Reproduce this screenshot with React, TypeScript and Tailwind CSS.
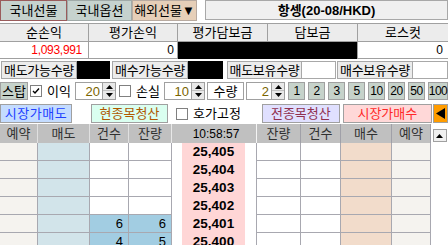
import React from "react";

function Spin({ value, boxCls }: { value: string; boxCls: string }) {
  return (
    <div className="flex h-[18px]">
      <div className={`${boxCls} h-[18px] bg-white border border-[#a0a0a0] border-r-0 flex items-center justify-end pr-[2px] text-[#7a6400] text-[13px]`}>
        {value}
      </div>
      <div className="w-[14px] h-[18px] flex flex-col border border-[#a0a0a0] bg-[#e8e8e8]">
        <div className="h-[8px] flex items-center justify-center border-b border-[#c0c0c0]">
          <svg width="7" height="4" viewBox="0 0 7 4"><polygon points="3.5,0 7,4 0,4" fill="#000" /></svg>
        </div>
        <div className="flex-1 flex items-center justify-center">
          <svg width="7" height="4" viewBox="0 0 7 4"><polygon points="0,0 7,0 3.5,4" fill="#000" /></svg>
        </div>
      </div>
    </div>
  );
}

function Check({ checked }: { checked?: boolean }) {
  return (
    <div className="w-[12px] h-[12px] border border-[#808080] bg-white flex items-center justify-center">
      {checked && (
        <svg width="8" height="8" viewBox="0 0 8 8">
          <polyline points="1,4 3,6 7,1.5" fill="none" stroke="#000" strokeWidth="1.4" />
        </svg>
      )}
    </div>
  );
}

const rows = [
  { p: "25,405", c: "", q: "" },
  { p: "25,404", c: "", q: "" },
  { p: "25,403", c: "", q: "" },
  { p: "25,402", c: "", q: "" },
  { p: "25,401", c: "6", q: "6" },
  { p: "25,400", c: "4", q: "5" },
];

export default function App() {
  return (
    <div className="w-[448px] h-[245px] bg-white overflow-hidden text-[13px] leading-none text-black font-['Liberation_Sans','Noto_Sans_CJK_KR',sans-serif]">
      {/* Row 1 tabs */}
      <div className="flex h-[21px] items-start">
        <div className="w-[67px] h-[21px] bg-[#c6d2ce] border border-[#9a5c5c] flex items-center justify-center">국내선물</div>
        <div className="w-[65px] h-[21px] bg-[#c6d2ce] border border-[#a0aaa8] flex items-center justify-center">국내옵션</div>
        <div className="w-[65px] h-[21px] bg-[#e6cfb8] border border-[#b8aaa0] flex items-center justify-center">해외선물▼</div>
        <div className="ml-[8px] flex-1 h-[20px] bg-[#f0f0f0] border border-[#a8a8a8] flex items-center justify-center font-bold">항셍(20-08/HKD)</div>
      </div>

      {/* Row 2-3 summary table */}
      <div className="mt-[2px] grid grid-cols-[89px_89px_90px_90px_90px] border-t border-[#a0a0a0]">
        {["순손익", "평가손익", "평가담보금", "담보금", "로스컷"].map((h, i) => (
          <div key={h} className={`h-[18px] bg-[#ececec] border-b border-[#a0a0a0] flex items-center justify-center ${i < 4 ? "border-r" : ""}`}>{h}</div>
        ))}
        <div className="h-[17px] border-r border-b border-[#a0a0a0] flex items-center justify-end pr-[6px] text-[#ff0000] text-[12px] tracking-[-0.3px]">1,093,991</div>
        <div className="h-[17px] border-r border-b border-[#a0a0a0] flex items-center justify-end pr-[3px] text-[12px]">0</div>
        <div className="h-[17px] bg-black"></div>
        <div className="h-[17px] bg-black border-r border-[#a0a0a0]"></div>
        <div className="h-[17px] border-b border-[#a0a0a0] flex items-center justify-end pr-[5px] text-[12px]">0</div>
      </div>

      {/* Row 4 */}
      <div className="mt-[2px] flex h-[18px] items-stretch">
        <div className="ml-[1px] w-[76px] bg-[#ececec] border border-[#a8a8a8] flex items-center justify-center tracking-[-0.3px]">매도가능수량</div>
        <div className="w-[33px] bg-black"></div>
        <div className="ml-[2px] w-[76px] bg-[#ececec] border border-[#a8a8a8] flex items-center justify-center tracking-[-0.3px]">매수가능수량</div>
        <div className="w-[35px] bg-black"></div>
        <div className="ml-[4px] w-[75px] bg-[#ececec] border border-[#a8a8a8] flex items-center justify-center tracking-[-0.3px]">매도보유수량</div>
        <div className="w-[34px] bg-white border border-l-0 border-[#a8a8a8]"></div>
        <div className="ml-[1px] w-[76px] bg-[#ececec] border border-[#a8a8a8] flex items-center justify-center tracking-[-0.3px]">매수보유수량</div>
        <div className="flex-1 bg-white border border-l-0 border-[#a8a8a8]"></div>
      </div>

      {/* Row 5 */}
      <div className="mt-[3px] flex h-[18px] items-center">
        <div className="w-[28px] h-[18px] bg-[#c6d2ca] border border-[#a0a0a0] flex items-center justify-center">스탑</div>
        <div className="ml-[2px]"><Check checked /></div>
        <div className="ml-[5px] w-[26px]">이익</div>
        <div className="ml-[2px]"><Spin value="20" boxCls="w-[27px]" /></div>
        <div className="ml-[3px]"><Check /></div>
        <div className="ml-[5px] w-[26px]">손실</div>
        <div className="ml-[2px]"><Spin value="10" boxCls="w-[27px]" /></div>
        <div className="ml-[2px] w-[37px] h-[18px] bg-white border border-[#a0a0a0] flex items-center justify-center">수량</div>
        <div className="ml-[2px]"><Spin value="2" boxCls="w-[25px]" /></div>
        <div className="ml-[3px] flex gap-[3px]">
          {["1", "2", "3", "5", "10", "20", "50"].map((n) => (
            <div key={n} className="w-[17px] h-[18px] bg-[#c6d2ca] border border-[#a0a0a0] flex items-center justify-center text-[12px] tracking-[-0.5px]">{n}</div>
          ))}
          <div className="w-[20px] h-[18px] bg-[#c6d2ca] border border-[#a0a0a0] flex items-center justify-center text-[12px] tracking-[-0.5px]">100</div>
        </div>
      </div>

      {/* Row 6 */}
      <div className="mt-[4px] flex h-[19px] items-center">
        <div className="w-[72px] h-[19px] bg-[#c4dcff] border border-[#a0a0a0] flex items-center justify-center text-[#2040ff] tracking-[0.5px]">시장가매도</div>
        <div className="ml-[19px] w-[77px] h-[19px] bg-[#dafff0] border border-[#a0a0a0] flex items-center justify-center text-[#b05800]">현종목청산</div>
        <div className="ml-[8px]"><Check /></div>
        <div className="ml-[5px]">호가고정</div>
        <div className="ml-[21px] w-[78px] h-[19px] bg-[#e0e0ff] border border-[#a0a0a0] flex items-center justify-center text-[#903050]">전종목청산</div>
        <div className="ml-[3px] w-[89px] h-[19px] bg-[#ffd8d8] border border-[#a0a0a0] flex items-center justify-center text-[#ff2828]">시장가매수</div>
        <div className="ml-[1px] flex-1 h-[19px] bg-[#ff9c00] border border-[#a0a0a0] flex items-center justify-center">
          <svg width="9" height="11" viewBox="0 0 9 11"><polygon points="9,0 9,11 0,5.5" fill="#000" /></svg>
        </div>
      </div>

      {/* Order book header */}
      <div className="mt-[1px] flex h-[19px] text-[#303030]">
        <div className="w-[38px] bg-[#c0c0c0] border-r border-[#e0e0e0] flex items-center justify-center">예약</div>
        <div className="w-[52px] bg-[#c0c0c0] border-r border-[#e0e0e0] flex items-center justify-center">매도</div>
        <div className="w-[39px] bg-[#c0c0c0] border-r border-[#e0e0e0] flex items-center justify-center">건수</div>
        <div className="w-[43px] bg-[#c0c0c0] border-r border-[#e8e8e8] flex items-center justify-center">잔량</div>
        <div className="w-[85px] bg-[#c0c0c0] border-r border-[#f4f4f4] flex items-center justify-center text-black text-[12px] pl-[4px]">10:58:57</div>
        <div className="w-[44px] bg-[#c0c0c0] border-r border-[#a0a0a8] flex items-center justify-center">잔량</div>
        <div className="w-[40px] bg-[#c0c0c0] border-r border-[#a0a0a8] flex items-center justify-center">건수</div>
        <div className="w-[51px] bg-[#c0c0c0] border-r border-[#a0a0a8] flex items-center justify-center">매수</div>
        <div className="w-[39px] bg-[#c0c0c0] border-r border-[#a0a0a8] flex items-center justify-center">예약</div>
        <div className="flex-1 bg-white flex items-start justify-center pt-[5px]">
          <div className="w-[14px] h-[13px] bg-[#f0f0f0] border border-[#a0a0a0] flex items-center justify-center">
            <svg width="7" height="4" viewBox="0 0 7 4"><polygon points="3.5,0 7,4 0,4" fill="#000" /></svg>
          </div>
        </div>
      </div>

      {/* Order book rows */}
      <div className="flex flex-col">
        {rows.map((r) => (
          <div key={r.p} className="flex h-[18px]">
            <div className="w-[38px] bg-[#f5f3ef] border-r border-b border-[#a8a8b0]"></div>
            <div className="w-[52px] bg-[#d2e4ea] border-r border-b border-[#a8a8b0]"></div>
            <div className={`w-[39px] border-r border-b border-[#a8a8b0] flex items-center justify-end pr-[5px] ${r.c ? "bg-[#a2cde2]" : "bg-white"}`}>{r.c}</div>
            <div className={`w-[43px] border-r border-b border-[#a8a8b0] flex items-center justify-end pr-[5px] ${r.q ? "bg-[#a2cde2]" : "bg-white"}`}>{r.q}</div>
            <div className="w-[10px] bg-white"></div>
            <div className="w-[63px] bg-[#ffd6d6] flex items-center justify-center font-bold text-[13.5px]">{r.p}</div>
            <div className="w-[12px] bg-white border-r border-[#a8a8b0]"></div>
            <div className="w-[44px] bg-white border-r border-b border-[#a8a8b0]"></div>
            <div className="w-[40px] bg-white border-r border-b border-[#a8a8b0]"></div>
            <div className="w-[51px] bg-[#f2dccb] border-r border-b border-[#a8a8b0]"></div>
            <div className="w-[39px] bg-[#f5f3ef] border-r border-b border-[#a8a8b0]"></div>
            <div className="flex-1 bg-white"></div>
          </div>
        ))}
      </div>
    </div>
  );
}
